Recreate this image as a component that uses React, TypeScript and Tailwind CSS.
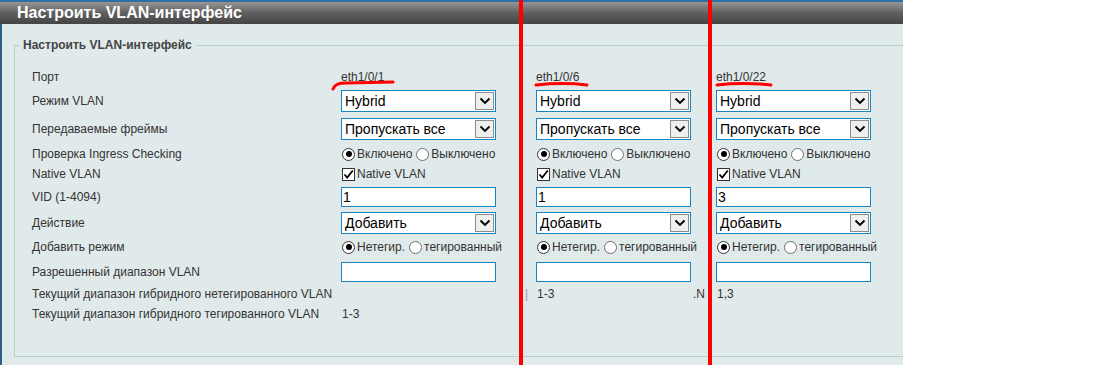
import React from "react";

function Chevron() {
  return (
    <svg width="12" height="8" viewBox="0 0 12 8">
      <path d="M1.5 1.5 L6 6 L10.5 1.5" fill="none" stroke="#000" strokeWidth="1.9" />
    </svg>
  );
}

function Select({ value }: { value: string }) {
  return (
    <div className="flex h-[22px] w-[155px] items-center justify-between border border-[#1586c3] bg-white pl-[3px] pr-[1px]">
      <span className="text-[14px] leading-none text-black">{value}</span>
      <div className="flex h-[18px] w-[19px] items-center justify-center border border-[#8c8c8c] bg-[#efefef]">
        <Chevron />
      </div>
    </div>
  );
}

function TextInput({ value }: { value: string }) {
  return (
    <div className="flex h-[20px] w-[155px] items-center border border-[#1586c3] bg-white pl-[1px]">
      <span className="text-[14px] leading-none text-black">{value}</span>
    </div>
  );
}

function Radio({ checked }: { checked?: boolean }) {
  return (
    <span
      className={
        "flex h-[13px] w-[13px] items-center justify-center rounded-full border bg-white " +
        (checked ? "border-[#333]" : "border-[#6f6f6f]")
      }
    >
      {checked && <span className="h-[6px] w-[6px] rounded-full bg-black" />}
    </span>
  );
}

function RadioPair({ a, b }: { a: string; b: string }) {
  return (
    <div className="flex items-center pl-[1px] text-[12px] text-[#333]">
      <Radio checked />
      <span className="ml-[2px]">{a}</span>
      <span className="ml-[4px]">
        <Radio />
      </span>
      <span className="ml-[2px]">{b}</span>
    </div>
  );
}

function Check() {
  return (
    <div className="flex items-center pl-[1px] text-[12px] text-[#333]">
      <span className="flex h-[13px] w-[13px] items-center justify-center border border-[#333] bg-white">
        <svg width="11" height="11" viewBox="0 0 11 11">
          <path d="M1.5 5.5 L4.2 8.5 L9.8 1.5" fill="none" stroke="#000" strokeWidth="1.8" />
        </svg>
      </span>
      <span className="ml-[2px]">Native VLAN</span>
    </div>
  );
}

const rowCls = "grid grid-cols-[309px_195px_180px_1fr] items-center";

export default function App() {
  return (
    <div className="relative h-[365px] w-[1093px] overflow-hidden bg-white font-['Liberation_Sans',Arial,sans-serif]">
      <div className="flex h-full w-[903px] flex-col overflow-hidden bg-[#e1eaeb]">
        <div className="flex h-[24px] shrink-0 items-center border-t-2 border-[#2b6fa6] bg-linear-to-b from-[#979797] via-[#5f5f5f] to-[#444444] pl-[17px]">
          <span className="text-[16px] font-bold leading-none text-white">Настроить VLAN-интерфейс</span>
        </div>
        <div className="flex-1 border-l-2 border-[#2d5f88] pl-[12px] pt-[14px]">
          <fieldset className="w-[960px] border border-[#b7cece] pb-[32px]">
            <legend className="ml-[4px] px-[4px] text-[12px] font-bold leading-[14px] text-[#444]">
              Настроить VLAN-интерфейс
            </legend>
            <div className="flex flex-col pl-[17px] pt-[15px] text-[12px] text-[#333]">
              <div className={rowCls + " h-[20px]"}>
                <span>Порт</span>
                <span>eth1/0/1</span>
                <span>eth1/0/6</span>
                <span>eth1/0/22</span>
              </div>
              <div className={rowCls + " h-[28px]"}>
                <span>Режим VLAN</span>
                <Select value="Hybrid" />
                <Select value="Hybrid" />
                <Select value="Hybrid" />
              </div>
              <div className={rowCls + " h-[28px]"}>
                <span>Передаваемые фреймы</span>
                <Select value="Пропускать все" />
                <Select value="Пропускать все" />
                <Select value="Пропускать все" />
              </div>
              <div className={rowCls + " h-[22px]"}>
                <span>Проверка Ingress Checking</span>
                <RadioPair a="Включено" b="Выключено" />
                <RadioPair a="Включено" b="Выключено" />
                <RadioPair a="Включено" b="Выключено" />
              </div>
              <div className={rowCls + " h-[16px]"}>
                <span>Native VLAN</span>
                <Check />
                <Check />
                <Check />
              </div>
              <div className={rowCls + " h-[31px]"}>
                <span>VID (1-4094)</span>
                <TextInput value="1" />
                <TextInput value="1" />
                <TextInput value="3" />
              </div>
              <div className={rowCls + " h-[22px]"}>
                <span>Действие</span>
                <Select value="Добавить" />
                <Select value="Добавить" />
                <Select value="Добавить" />
              </div>
              <div className={rowCls + " h-[26px]"}>
                <span>Добавить режим</span>
                <RadioPair a="Нетегир." b="тегированный" />
                <RadioPair a="Нетегир." b="тегированный" />
                <RadioPair a="Нетегир." b="тегированный" />
              </div>
              <div className={rowCls + " h-[24px]"}>
                <span>Разрешенный диапазон VLAN</span>
                <TextInput value="" />
                <TextInput value="" />
                <TextInput value="" />
              </div>
              <div className={rowCls + " h-[20px]"}>
                <span className="whitespace-nowrap">Текущий диапазон гибридного нетегированного VLAN</span>
                <div className="flex justify-end pr-[8px] text-[#999]">|</div>
                <div className="flex justify-between pl-[1px] pr-[11px]">
                  <span>1-3</span>
                  <span>.N</span>
                </div>
                <span className="pl-[1px]">1,3</span>
              </div>
              <div className={rowCls + " h-[20px]"}>
                <span className="whitespace-nowrap">Текущий диапазон гибридного тегированного VLAN</span>
                <span className="pl-[1px]">1-3</span>
                <span />
                <span />
              </div>
            </div>
          </fieldset>
        </div>
      </div>

      <div className="absolute left-[519px] top-0 h-full w-[4px] bg-[#ff0000]" />
      <div className="absolute left-[708px] top-0 h-full w-[4px] bg-[#ff0000]" />

      <svg className="pointer-events-none absolute left-0 top-0" width="1093" height="365">
        <path d="M333 89 C335 84 339 83 346 83 L393 82" fill="none" stroke="#ff0000" strokeWidth="3" strokeLinecap="round" />
        <path d="M536 85 C555 83 570 83 587 85" fill="none" stroke="#ff0000" strokeWidth="3" strokeLinecap="round" />
        <path d="M717 85 C735 83 752 83 771 85" fill="none" stroke="#ff0000" strokeWidth="3" strokeLinecap="round" />
      </svg>
    </div>
  );
}
